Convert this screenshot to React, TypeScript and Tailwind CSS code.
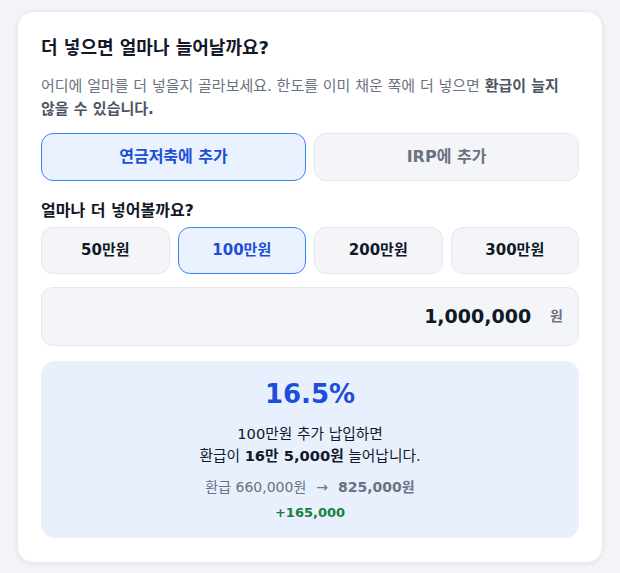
import { useState } from 'react';

const FONT = "font-['DejaVu_Sans','Noto_Sans_CJK_KR',sans-serif]";

const accounts = ['연금저축에 추가', 'IRP에 추가'];
const amounts = [50, 100, 200, 300];

const App = () => {
  const [account, setAccount] = useState(0);
  const [amount, setAmount] = useState(100);

  const won = amount * 10000;
  const refund = 660000;
  const extra = Math.round(won * 0.165);

  return (
    <div className={`min-h-[573px] bg-[#f2f4f8] px-[17px] pt-[11px] pb-[10px] ${FONT}`}>
      <div className="rounded-[16px] border border-[#e8ebf0] bg-white px-[23px] pt-[23px] pb-[24px] shadow-[0_1px_4px_rgba(15,23,42,0.08)]">
        <h2 className="text-[18px] font-bold leading-[26px] text-[#111827]">
          더 넣으면 얼마나 늘어날까요?
        </h2>
        <p className="mt-[14px] break-keep text-[15px] leading-[23px] text-[#6b7280]">
          어디에 얼마를 더 넣을지 골라보세요. 한도를 이미 채운 쪽에 더 넣으면{' '}
          <b className="font-bold text-[#4b5563]">환급이 늘지 않을 수 있습니다.</b>
        </p>

        {/* 계좌 선택 */}
        <div className="mt-[12px] grid grid-cols-2 gap-[8px]">
          {accounts.map((label, i) => (
            <button
              key={label}
              onClick={() => setAccount(i)}
              className={
                account === i
                  ? 'h-[48px] rounded-[12px] border border-[#3b82f6] bg-[#eaf2ff] text-[16px] font-bold text-[#1d4ed8]'
                  : 'h-[48px] rounded-[12px] border border-[#e3e7ee] bg-[#f3f5f9] text-[16px] font-bold text-[#6b7280]'
              }
            >
              {label}
            </button>
          ))}
        </div>

        <div className="mt-[19px] text-[16px] font-bold leading-[22px] text-[#111827]">
          얼마나 더 넣어볼까요?
        </div>

        {/* 금액 선택 */}
        <div className="mt-[5px] grid grid-cols-4 gap-[8px]">
          {amounts.map((a) => (
            <button
              key={a}
              onClick={() => setAmount(a)}
              className={
                amount === a
                  ? 'h-[47px] rounded-[12px] border border-[#3b82f6] bg-[#eaf2ff] text-[15px] font-bold text-[#1d4ed8]'
                  : 'h-[47px] rounded-[12px] border border-[#e3e7ee] bg-[#f3f5f9] text-[15px] font-bold text-[#111827]'
              }
            >
              {a}만원
            </button>
          ))}
        </div>

        <div className="mt-[13px] flex h-[59px] items-center justify-end gap-[19px] rounded-[12px] border border-[#e3e7ee] bg-[#f3f5f9] pr-[15px]">
          <span className="text-[19px] font-bold text-[#111827]">{won.toLocaleString('en-US')}</span>
          <span className="text-[14px] font-bold text-[#6b7280]">원</span>
        </div>

        {/* 결과 */}
        <div className="mt-[15px] flex flex-col items-center rounded-[14px] bg-[#e8f0fe] pt-[17px] pb-[15px] text-center">
          <div className="text-[26px] font-bold leading-[32px] text-[#1d4ed8]">16.5%</div>
          <div className="mt-[13px] text-[14.7px] leading-[22px] text-[#111827]">
            <div>{amount}만원 추가 납입하면</div>
            <div>
              환급이 <b className="font-bold">16만 5,000원</b> 늘어납니다.
            </div>
          </div>
          <div className="mt-[9px] text-[14px] leading-[22px] text-[#6b7280]">
            환급 {refund.toLocaleString('en-US')}원
            <span className="mx-[10px]">→</span>
            <b className="font-bold">{(refund + extra).toLocaleString('en-US')}원</b>
          </div>
          <div className="mt-[5px] text-[13px] font-bold leading-[20px] text-[#15803d]">
            +{extra.toLocaleString('en-US')}
          </div>
        </div>
      </div>
    </div>
  );
};

export default App;
